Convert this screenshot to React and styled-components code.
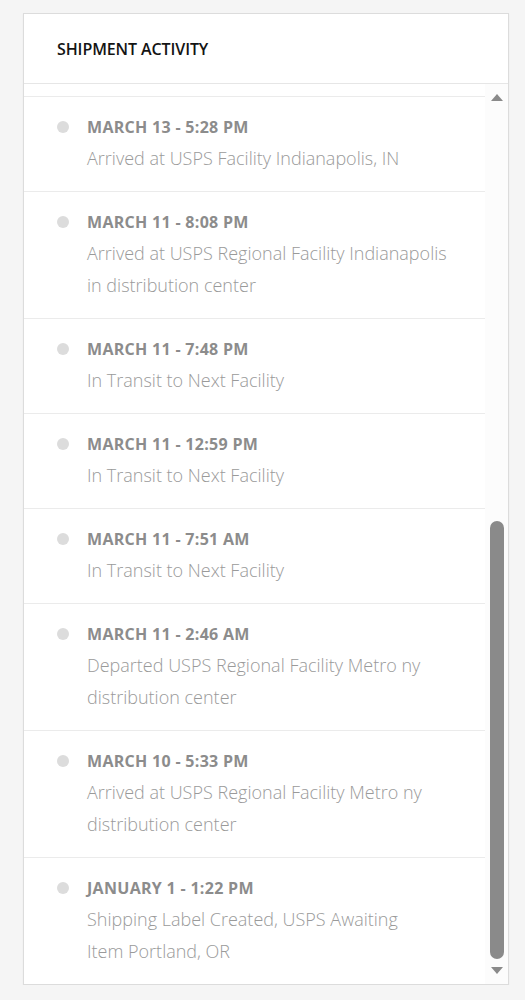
import React from "react";
import styled, { createGlobalStyle } from "styled-components";

const GlobalStyle = createGlobalStyle`
    body {
        margin: 0;
        background: #f5f5f5;
        font-family: "Open Sans", "Liberation Sans", sans-serif;
    }
`;

const Page = styled.div`
    padding: 13px 17px 0 23px;
`;

const Card = styled.div`
    width: 484px;
    background: #fff;
    border: 1px solid #dcdcdc;
    box-shadow: 0 1px 2px rgba(0, 0, 0, 0.04);
`;

const Header = styled.div`
    height: 69px;
    padding-left: 33px;
    display: flex;
    align-items: center;
    border-bottom: 1px solid #e6e6e6;
    font-size: 16px;
    font-weight: 600;
    letter-spacing: -0.1px;
    color: #141414;
`;

const Body = styled.div`
    display: flex;
    height: 900px;
`;

const Viewport = styled.div`
    flex: 1;
    overflow: hidden;
    display: flex;
    flex-direction: column;
    justify-content: flex-end;
`;

/* bottom of the row scrolled out of view above */
const Tail = styled.div`
    flex: 1;
    min-height: 12px;
`;

const Row = styled.div`
    flex-shrink: 0;
    display: flex;
    padding: 18px 20px 17px 33px;
    border-top: 1px solid #ebebeb;
`;

const Dot = styled.span`
    flex-shrink: 0;
    width: 12px;
    height: 12px;
    margin: 6px 18px 0 0;
    border-radius: 50%;
    background: #dcdcdc;
`;

const Info = styled.div`
    display: flex;
    flex-direction: column;
`;

const When = styled.div`
    font-size: 16px;
    line-height: 24px;
    font-weight: 700;
    letter-spacing: 0.3px;
    color: #8c8c8c;
`;

const What = styled.div`
    margin-top: 3px;
    max-width: 370px;
    white-space: pre-line;
    font-size: 18px;
    line-height: 32px;
    font-weight: 300;
    color: #9a9a9a;
`;

const Track = styled.div`
    width: 23px;
    display: flex;
    flex-direction: column;
    align-items: center;
    background: #fcfcfc;
`;

const Arrow = styled.div`
    width: 0;
    height: 0;
    margin: ${(p) => (p.$up ? "10px 0 8px" : "8px 0 10px")};
    border-left: 6px solid transparent;
    border-right: 6px solid transparent;
    ${(p) => (p.$up ? "border-bottom" : "border-top")}: 7px solid #8a8a8a;
`;

const Rail = styled.div`
    flex: 1;
    width: 14px;
    display: flex;
    flex-direction: column;
    justify-content: flex-end;
`;

const Thumb = styled.div`
    width: 14px;
    border-radius: 7px;
    background: #8a8a8a;
`;

const events = [
    { when: "MARCH 13 - 5:28 PM", what: "Arrived at USPS Facility Indianapolis, IN" },
    { when: "MARCH 11 - 8:08 PM", what: "Arrived at USPS Regional Facility Indianapolis in distribution center" },
    { when: "MARCH 11 - 7:48 PM", what: "In Transit to Next Facility" },
    { when: "MARCH 11 - 12:59 PM", what: "In Transit to Next Facility" },
    { when: "MARCH 11 - 7:51 AM", what: "In Transit to Next Facility" },
    { when: "MARCH 11 - 2:46 AM", what: "Departed USPS Regional Facility Metro ny distribution center" },
    { when: "MARCH 10 - 5:33 PM", what: "Arrived at USPS Regional Facility Metro ny distribution center" },
    { when: "JANUARY 1 - 1:22 PM", what: "Shipping Label Created, USPS Awaiting\nItem Portland, OR" },
];

export default function App() {
    return (
        <>
            <GlobalStyle />
            <Page>
                <Card>
                    <Header>SHIPMENT ACTIVITY</Header>
                    <Body>
                        <Viewport>
                            <Tail />
                            {events.map((e) => (
                                <Row key={e.when}>
                                    <Dot />
                                    <Info>
                                        <When>{e.when}</When>
                                        <What>{e.what}</What>
                                    </Info>
                                </Row>
                            ))}
                        </Viewport>
                        <Track>
                            <Arrow $up />
                            <Rail>
                                <Thumb style={{ height: `${(442 / 858) * 100}%` }} />
                            </Rail>
                            <Arrow />
                        </Track>
                    </Body>
                </Card>
            </Page>
        </>
    );
}
